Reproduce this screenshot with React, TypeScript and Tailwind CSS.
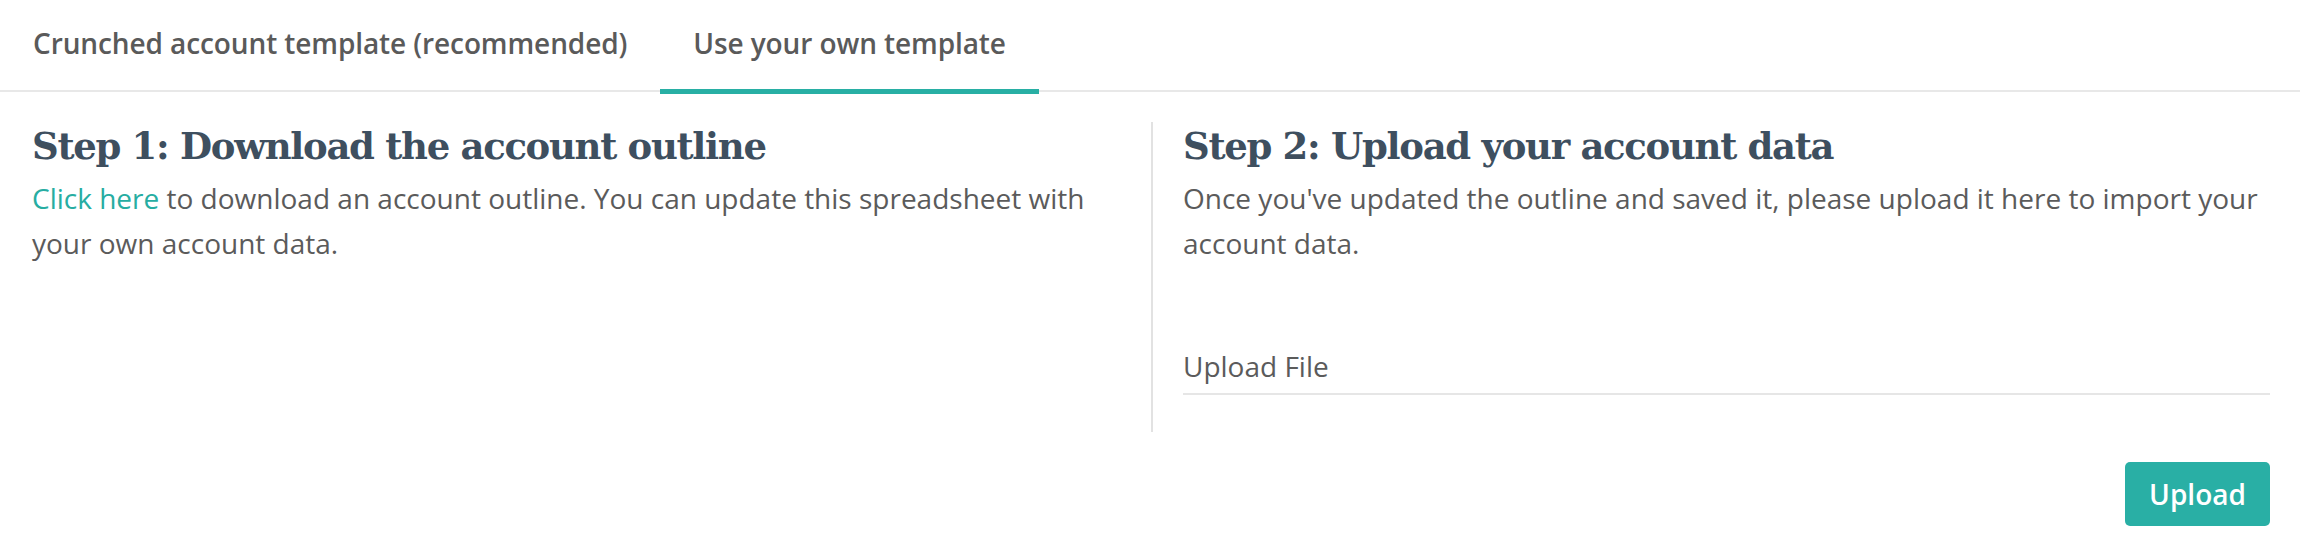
import React from "react";

export default function App() {
  const body = { fontFamily: "'Open Sans', 'Noto Sans', sans-serif" };
  const slab = { fontFamily: "'DejaVu Serif', 'Liberation Serif', serif" };
  return (
    <div className="w-[2300px] h-[552px] bg-white" style={body}>
      <div className="flex h-[92px] border-b-2 border-[#e8e8e8]">
        <div className="h-[94px] -mb-[4px] px-[33px] pt-[23px] text-[28px] leading-[40px] font-semibold text-[#5a5a5a] tracking-[-0.1px]">
          Crunched account template (recommended)
        </div>
        <div className="h-[94px] -mb-[4px] px-[33px] pt-[23px] text-[28px] leading-[40px] font-semibold text-[#5a5a5a] tracking-[-0.1px] border-b-[5px] border-[#28afa4]">
          Use your own template
        </div>
      </div>
      <div className="flex pt-[30px] pr-[30px]">
        <div className="w-[1151px] pl-[32px] pr-[40px] h-[310px]">
          <h2 className="text-[37px] leading-[48px] font-bold text-[#3e4f5f] tracking-[-1.3px]" style={slab}>
            Step 1: Download the account outline
          </h2>
          <p className="mt-[6px] text-[28px] leading-[45px] text-[#5b5b5b]">
            <span className="text-[#27ada2]">Click here</span> to download an account outline. You can update this spreadsheet with your own account data.
          </p>
        </div>
        <div className="flex-1 border-l-2 border-[#e2e2e2] pl-[30px] h-[310px] flex flex-col">
          <h2 className="text-[37px] leading-[48px] font-bold text-[#3e4f5f] tracking-[-1.3px]" style={slab}>
            Step 2: Upload your account data
          </h2>
          <p className="mt-[6px] text-[28px] leading-[45px] text-[#5b5b5b]">
            Once you've updated the outline and saved it, please upload it here to import your account data.
          </p>
          <div className="mt-[78px] border-b-2 border-[#e6e6e6] pb-[4px] text-[28px] leading-[45px] text-[#5b5b5b]">
            Upload File
          </div>
        </div>
      </div>
      <div className="flex justify-end pr-[30px] mt-[30px]">
        <button className="w-[145px] h-[64px] rounded-[5px] bg-[#29afa5] text-white text-[28px] font-semibold">
          Upload
        </button>
      </div>
    </div>
  );
}
